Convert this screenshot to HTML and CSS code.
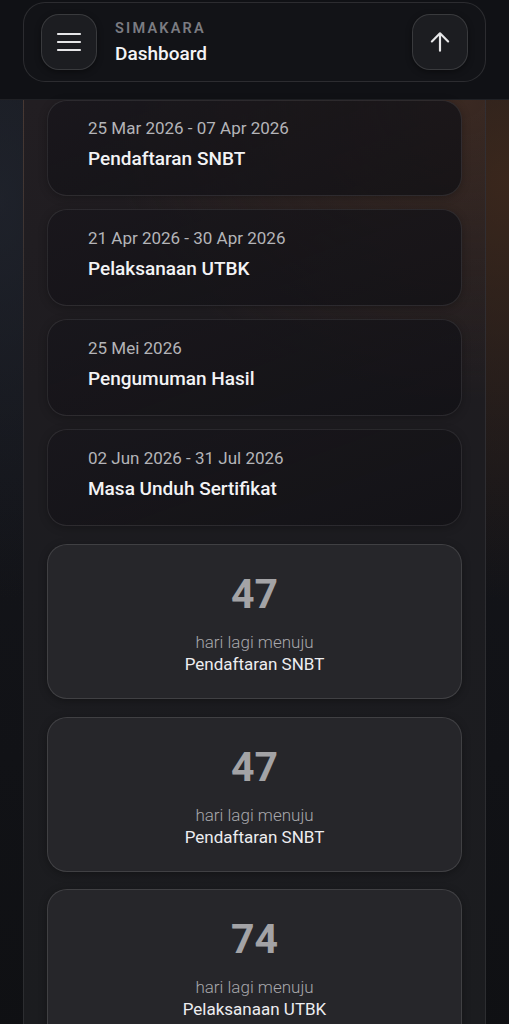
FILE: index.html
```html
<!DOCTYPE html>
<html lang="id">
<head>
<meta charset="utf-8">
<meta name="viewport" content="width=device-width, initial-scale=1">
<title>SIMAKARA Dashboard</title>
<link rel="stylesheet" href="styles.css">
</head>
<body>
<header class="topbar">
  <div class="topbar-card">
    <button class="icon-btn" aria-label="Menu">
      <svg width="26" height="26" viewBox="0 0 26 26" fill="none" stroke="#e6e6e8" stroke-width="2.2" stroke-linecap="round">
        <path d="M2 5h22M2 13h22M2 21h22"/>
      </svg>
    </button>
    <div class="brand">
      <div class="brand-name">SIMAKARA</div>
      <div class="brand-page">Dashboard</div>
    </div>
    <button class="icon-btn" aria-label="Ke atas">
      <svg width="26" height="26" viewBox="0 0 24 24" fill="none" stroke="#e6e6e8" stroke-width="2" stroke-linecap="round" stroke-linejoin="round">
        <path d="M12 20V4M4.5 11.5L12 4l7.5 7.5"/>
      </svg>
    </button>
  </div>
</header>
<main class="panel">
  <section class="timeline">
    <div class="event">
      <div class="event-date">25 Mar 2026 - 07 Apr 2026</div>
      <div class="event-title">Pendaftaran SNBT</div>
    </div>
    <div class="event">
      <div class="event-date">21 Apr 2026 - 30 Apr 2026</div>
      <div class="event-title">Pelaksanaan UTBK</div>
    </div>
    <div class="event">
      <div class="event-date">25 Mei 2026</div>
      <div class="event-title">Pengumuman Hasil</div>
    </div>
    <div class="event">
      <div class="event-date">02 Jun 2026 - 31 Jul 2026</div>
      <div class="event-title">Masa Unduh Sertifikat</div>
    </div>
  </section>
  <section class="countdowns">
    <div class="count">
      <div class="count-num">47</div>
      <div class="count-label">hari lagi menuju</div>
      <div class="count-name">Pendaftaran SNBT</div>
    </div>
    <div class="count">
      <div class="count-num">47</div>
      <div class="count-label">hari lagi menuju</div>
      <div class="count-name">Pendaftaran SNBT</div>
    </div>
    <div class="count">
      <div class="count-num">74</div>
      <div class="count-label">hari lagi menuju</div>
      <div class="count-name">Pelaksanaan UTBK</div>
    </div>
  </section>
</main>
</body>
</html>
```

FILE: styles.css
```css
* { box-sizing: border-box; }

html, body { margin: 0; padding: 0; }

body {
  font-family: Roboto, "Liberation Sans", Arial, sans-serif;
  color: #f1f1f3;
  min-height: 1024px;
  overflow: hidden;
  background:
    radial-gradient(ellipse 380px 420px at 100% 180px, rgba(70, 44, 28, 0.75), rgba(70, 44, 28, 0) 100%),
    radial-gradient(ellipse 200px 400px at 0% 200px, rgba(34, 38, 48, 0.7), rgba(34, 38, 48, 0) 100%),
    linear-gradient(180deg, #17191f 0%, #131419 45%, #0f1013 100%);
}

.topbar {
  height: 100px;
  background: #101115;
  border-bottom: 1px solid rgba(255, 255, 255, 0.07);
  padding: 2px 23px 0;
}

.topbar-card {
  height: 80px;
  display: flex;
  align-items: center;
  gap: 18px;
  padding: 0 17px;
  border: 1px solid rgba(255, 255, 255, 0.11);
  border-radius: 22px;
  background: #121317;
}

.icon-btn {
  width: 56px;
  height: 56px;
  flex: none;
  display: flex;
  align-items: center;
  justify-content: center;
  padding: 0;
  border-radius: 18px;
  border: 1px solid rgba(255, 255, 255, 0.13);
  background: #1c1d21;
  box-shadow: 0 2px 6px rgba(0, 0, 0, 0.4);
}

.brand {
  flex: 1;
  display: flex;
  flex-direction: column;
  gap: 4px;
  padding-top: 1px;
}

.brand-name {
  font-size: 14.5px;
  line-height: 18px;
  font-weight: 600;
  letter-spacing: 2.2px;
  color: #7b7c82;
}

.brand-page {
  font-size: 19px;
  line-height: 24px;
  font-weight: 500;
  color: #f4f4f6;
}

.panel {
  margin: 0 23px;
  min-height: 924px;
  padding: 0 23px;
  border-left: 1px solid rgba(255, 255, 255, 0.08);
  border-right: 1px solid rgba(255, 255, 255, 0.08);
  background:
    radial-gradient(ellipse 360px 300px at 95% 0%, rgba(78, 50, 34, 0.55), rgba(78, 50, 34, 0) 100%),
    linear-gradient(180deg, #221e22 0%, #1e1c20 30%, #1c1c20 50%, #1b1c1f 100%);
}

.timeline {
  display: flex;
  flex-direction: column;
  gap: 13px;
}

.event {
  height: 97px;
  padding: 17px 40px 0;
  border-radius: 20px;
  border: 1px solid rgba(255, 255, 255, 0.09);
  background: linear-gradient(160deg, rgba(24, 22, 27, 0.85), rgba(18, 17, 21, 0.8));
  box-shadow: 0 2px 8px rgba(0, 0, 0, 0.25);
}

.timeline .event:first-child {
  height: 96px;
  padding-top: 16px;
}

.event-date {
  font-size: 17px;
  line-height: 22px;
  color: #b4b4b8;
}

.event-title {
  margin-top: 8px;
  font-size: 19px;
  line-height: 24px;
  font-weight: 500;
  color: #f3f3f5;
}

.countdowns {
  display: flex;
  flex-direction: column;
  gap: 17.5px;
  padding-top: 18px;
}

.count {
  height: 155px;
  padding-top: 25px;
  display: flex;
  flex-direction: column;
  align-items: center;
  border-radius: 20px;
  border: 1px solid rgba(255, 255, 255, 0.12);
  background: #26262a;
  box-shadow: 0 2px 8px rgba(0, 0, 0, 0.3);
}

.count-num {
  font-size: 41px;
  line-height: 48px;
  font-weight: 700;
  color: #a3a3a6;
}

.count-label {
  margin-top: 13px;
  font-size: 17px;
  line-height: 22px;
  font-weight: 300;
  color: #a7a7ab;
}

.count-name {
  font-size: 17px;
  line-height: 22px;
  color: #ededf0;
}
```
